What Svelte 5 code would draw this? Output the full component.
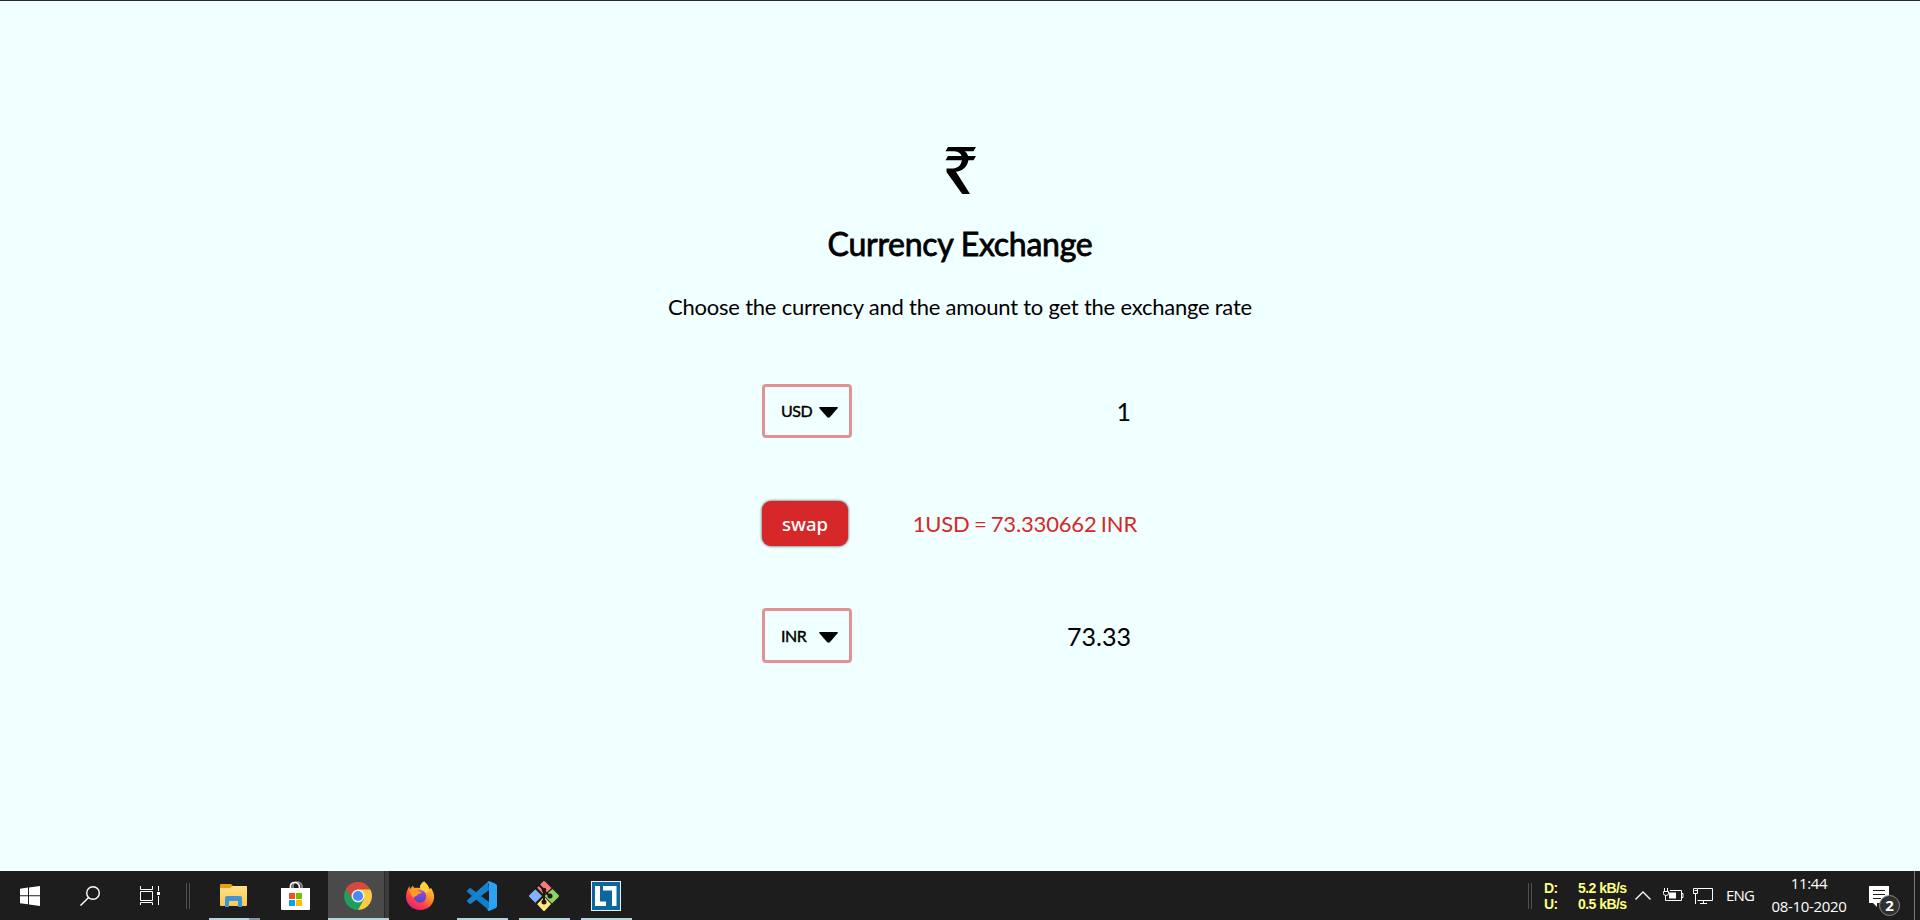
<script>
  const rows = { from: 'USD', to: 'INR', amount: '1', result: '73.33', rate: '1USD = 73.330662 INR' };
</script>

{#snippet picker(code)}
  <button class="picker">
    <span>{code}</span>
    <svg width="19" height="11" viewBox="0 0 19 11"><path d="M1 0h17q1.2 0 .8 1L11 10q-1.5 1.6-3 0L.2 1Q-.2 0 1 0z" /></svg>
  </button>
{/snippet}

<div class="screen">
  <main>
    <svg class="rupee" width="31" height="47" viewBox="0 0 31 47">
      <path d="M3 0H31L28.500 4.200H19.800Q22.500 6 23.200 9H31L28.500 13.200H23.400C22.300 19.500 18 23.800 11 24.800L25 47H17.200L1.500 25V21.500H6.500C12.500 21.500 16.200 18.500 16.800 13.200H.5L3 9H16.600C15.500 5.500 12 4.200 8 4.200H.5z" />
    </svg>
    <h1>Currency Exchange</h1>
    <p class="hint">Choose the currency and the amount to get the exchange rate</p>

    <section>
      <div class="row">{@render picker(rows.from)}<span class="amount">{rows.amount}</span></div>
      <div class="row mid"><button class="swap">swap</button><span class="rate">{rows.rate}</span></div>
      <div class="row last">{@render picker(rows.to)}<span class="amount">{rows.result}</span></div>
    </section>
  </main>

  <footer>
    <div class="sys">
      <svg width="20" height="20" viewBox="0 0 20 20" fill="#fff"><path d="M0 2.8 8 1.6V9.2H0zM9 1.4 20 0V9.2H9zM0 10.2H8V18.2L0 17.2zM9 10.2H20V20L9 18.4z" /></svg>
    </div>
    <div class="sys">
      <svg width="20" height="20" viewBox="0 0 20 20" fill="none" stroke="#fff" stroke-width="1.4"><circle cx="13" cy="7" r="6.3" /><path d="M8.6 11.5.5 19.6" /></svg>
    </div>
    <div class="sys view">
      <svg width="20" height="20" viewBox="0 0 20 20" fill="none" stroke="#fff"><path d="M.5 0V3.5H12.5V0M.5 5.5H12.5V14.5H.5zM.5 19V16.500H12.5V19M18.500 0V5M18.500 10V19" /><path fill="#fff" stroke="none" d="M17 6h3v3h-3z" /></svg>
    </div>
    <div class="grip"></div>

    <div class="apps">
      <div class="app open multi">
        <svg width="30" height="30" viewBox="0 0 30 30">
          <defs><linearGradient id="fold" x2="0" y2="1"><stop offset="0" stop-color="#ffe08a" /><stop offset="1" stop-color="#fcc84d" /></linearGradient></defs>
          <path fill="#e5a00d" d="M1 4q0-1 1-1h10l2 2h13q1 0 1 1v3H1z" />
          <path fill="url(#fold)" d="M1 7h10l3-2h13q1 0 1 1v18q0 1-1 1H2q-1 0-1-1z" />
          <path fill="#3d94d9" d="M8 15h13q2 0 2 2v9h-4v-6h-9v6H6v-9q0-2 2-2z" />
        </svg>
      </div>
      <div class="app">
        <svg width="30" height="30" viewBox="0 0 30 30">
          <g fill="none"><path stroke="#999" stroke-width="1.6" d="M12 8V5q0-4 4-4t5 4v3" /><path stroke="#fff" stroke-width="1.7" d="M9.500 8V5.500q0-4 4-4t5 4V8" /></g>
          <path fill="#fff" d="M0 7h29v21q0 1-1 1H1q-1 0-1-1z" />
          <path fill="#f25022" d="M8 12h6v6H8z" /><path fill="#7fba00" d="M15 12h6v6h-6z" /><path fill="#00a4ef" d="M8 19h6v6H8z" /><path fill="#ffb900" d="M15 19h6v6h-6z" />
        </svg>
      </div>
      <div class="app open active">
        <svg width="30" height="30" viewBox="0 0 30 30">
          <path fill="#d6493c" d="M2.900 8A14 14 0 0 1 27.100 8L15 15z" />
          <path fill="#d6493c" d="M2.900 8 9 18.500 15 15 15 8.500H27.400A14 14 0 0 0 2.900 8z" />
          <path fill="#1e9f5b" d="M2.900 8A14 14 0 0 0 15 29L20.600 18.500 15 21.500 9.400 18.300z" />
          <path fill="#fccd43" d="M15 8.500H27.400A14 14 0 0 1 15 29L20.800 18.200z" />
          <circle cx="15" cy="15" r="6.500" fill="#f1f1f1" /><circle cx="15" cy="15" r="5.100" fill="#4a8af5" />
        </svg>
      </div>
      <div class="app">
        <svg width="30" height="30" viewBox="0 0 30 30">
          <defs>
            <linearGradient id="fox" x1=".85" y1="0" x2=".25" y2="1"><stop offset="0" stop-color="#ffe34a" /><stop offset=".4" stop-color="#ff9a27" /><stop offset=".7" stop-color="#ff4344" /><stop offset="1" stop-color="#e51a87" /></linearGradient>
            <linearGradient id="globe" x2="0" y2="1"><stop offset="0" stop-color="#9a45e8" /><stop offset="1" stop-color="#514ac2" /></linearGradient>
          </defs>
          <path fill="url(#fox)" d="M19 .5C21 2 23.500 4.500 24.500 8L26 7C28 10 29.500 13 29 17 28.500 24 22.500 29 15.500 29 7.500 29 1.500 23.500 1 16.500 1 12 2.300 8 4.500 5L5 8 8 4.500 9 7C11 6.500 13 7 15 7 14.500 4.500 16.500 2 19 .5z" />
          <circle cx="15" cy="15.500" r="6.200" fill="url(#globe)" />
          <path fill="#ff9d25" d="M4.500 9C8 6.500 11 7.500 13 10L17 11C16 13 13 12.500 12.500 14 11 16 9 15 8.500 17 7 14 5 13 4.500 9z" />
          <path fill="#ffd23c" d="M19 .5C21 2 23.500 5 24 9 22.500 11 21.500 11.500 21.500 12.500 19.500 9 15.500 9 15 7 14.500 4.500 16.500 2 19 .5z" />
        </svg>
      </div>
      <div class="app open">
        <svg width="30" height="30" viewBox="0 0 30 30">
          <path fill="#0f7ecb" d="M0 9.500 2.500 7.300Q3.300 6.800 4.200 7.400L22 21V29.500L1 11.500Q-.3 10.500 0 9.500z" />
          <path fill="#1482cf" d="M0 20.500Q-.3 19.500 1 18.500L21 .5 22 9 4.200 22.600Q3.300 23.200 2.500 22.700z" />
          <path fill="#2aa4f2" d="M22 0 28.500 2.800Q30 3.500 30 5V25Q30 26.500 28.500 27.200L22 30Q20.500 30 20.500 28.500L22 27V3L20.500 1.500Q20.500 0 22 0z" />
        </svg>
      </div>
      <div class="app open">
        <svg width="30" height="30" viewBox="0 0 30 30">
          <path fill="#f77b7b" d="M14 .5q1-1 2 0l6.500 6.500-7.500 7-7-7z" /><path fill="#80b3ff" d="M.5 14l6.200-6 7.300 7-7 7.500L.5 16q-1-1 0-2z" />
          <path fill="#8dd35f" d="M23.500 8 29.500 14q1 1 0 2l-6.500 6.500-7.500-7.500z" /><path fill="#ffe680" d="M15 15.500l7 7.500-6 6.500q-1 1-2 0l-6-6.500z" />
          <path fill="none" stroke="#20160f" stroke-width="2" d="M10 4 15 9V22M15 10 21 15M7 22.500 14.500 15 7 7.500" /><g fill="#20160f"><circle cx="15" cy="9" r="2.300" /><circle cx="15" cy="21" r="2.500" /><circle cx="21" cy="15" r="2.500" /></g>
        </svg>
      </div>
      <div class="app open">
        <svg width="30" height="30" viewBox="0 0 30 30">
          <path fill="#e8f2f8" d="M0 0h30v30H0z" /><path fill="#0d669f" d="M1 1h28v28H1z" />
          <path fill="#fff" d="M4 5h5v15.500h6V25H4zM12 5h13.500v20H21V9.500h-9z" />
        </svg>
      </div>
    </div>

    <div class="tray">
      <div class="grip"></div>
      <div class="net"><span>D:</span><span>5.2 kB/s</span><span>U:</span><span>0.5 kB/s</span></div>
      <svg class="chev" width="16" height="9" viewBox="0 0 16 9" fill="none" stroke="#fff" stroke-width="1.300"><path d="M.5 8.500 8 1 15.500 8.500" /></svg>
      <svg class="batt" width="21" height="16" viewBox="0 0 21 16" fill="none" stroke="#fff"><path d="M7 3.500H18.500V13.500H4.500M18.500 6.500H20V10.500H18.500M1.500 1V4M4.500 1V4M.5 4.500H5.500V6.500Q5.500 8.500 3 8.500 .5 8.500.5 6.500zM2.500 9V13.500H4.500" /><path fill="#fff" stroke="none" d="M6 5.500h7v6H6z" /></svg>
      <svg class="mon" width="21" height="18" viewBox="0 0 21 18" fill="none" stroke="#fff"><path d="M5 1.500H19.500V13.500H4.500M10.500 13.500V16.500M7 16.500H14M.5 1.500H4.500V6.500H.5zM2.500 6.500V17M1.500 3.500H4" /></svg>
      <span class="lang">ENG</span>
      <div class="clock"><span class="time">11:44</span><span>08-10-2020</span></div>
      <div class="note">
        <svg width="20" height="21" viewBox="0 0 20 21"><path fill="#fff" d="M0 0h20v17H8v4l-4-4H0z" /><path stroke="#1d1d1d" stroke-width="1.200" d="M4 4.500h12M4 8.500h12M4 12.500h8" /></svg>
        <b>2</b>
      </div>
      <div class="edge"></div>
    </div>
  </footer>
</div>

<style>
  :global(body) { margin: 0; background: #f0ffff; }
  .screen { box-sizing: border-box; width: 1920px; height: 920px; border-top: 1px solid #29262c; background: #f0ffff; display: flex; flex-direction: column; font-family: Lato, sans-serif; color: #000; overflow: hidden; }
  main { height: 870px; box-sizing: border-box; padding-top: 146px; display: flex; flex-direction: column; align-items: center; }
  .rupee { display: block; }
  h1 { margin: 30px 0 0; font-size: 32px; line-height: 40px; font-weight: 400; letter-spacing: -0.270px; -webkit-text-stroke: 0.8px #000; white-space: nowrap; }
  .hint { margin: 28px 0 0; font-size: 22px; line-height: 30px; letter-spacing: -0.230px; white-space: nowrap; }
  section { width: 374px; margin-top: 62px; margin-left: -22px; display: flex; flex-direction: column; }
  .row { display: flex; justify-content: space-between; align-items: center; height: 54px; }
  .mid { height: 45px; margin: 63px 0 62px; }
  .last { height: 55px; }
  .picker { box-sizing: border-box; width: 90px; height: 100%; padding: 0 11px 0 16px; border: 3px solid #e39192; border-radius: 4px; background: transparent; display: flex; justify-content: space-between; align-items: center; font: 16px Lato, sans-serif; letter-spacing: -0.500px; -webkit-text-stroke: 0.4px #000; color: #000; }
  .picker span { margin-top: -1px; }
  .picker svg { margin-top: 3px; }
  .amount { font-size: 25px; line-height: 30px; margin-right: 5px; }
  .swap { width: 86px; height: 45px; padding: 0; border: 0; border-radius: 9px; background: #d62828; box-shadow: 0 0 3px #333; color: #fff; font: 500 18.500px "Noto Sans", sans-serif; }
  .rate { font-size: 22px; line-height: 30px; letter-spacing: -0.170px; word-spacing: -1.200px; margin-right: -1px; color: #d62828; white-space: nowrap; }

  footer { height: 49px; display: flex; background: #1d1d1d; color: #fff; font-family: "Open Sans", sans-serif; }
  footer svg { display: block; }
  .sys { width: 60px; display: flex; padding: 15px 0 0 20px; box-sizing: border-box; }
  .view { width: 66px; }
  .grip { box-sizing: border-box; width: 4px; height: 26px; margin-top: 12px; border: solid #505050; border-width: 0 1px; }
  .apps { display: flex; margin-left: 13px; }
  .app { position: relative; width: 62px; display: flex; justify-content: center; padding-top: 10px; box-sizing: border-box; }
  .open::after { content: ''; position: absolute; left: 6px; width: 51px; bottom: 0; height: 2px; background: #b5d3d8; }
  .multi::after { background: linear-gradient(90deg, #b5d3d8 40px, #80979b 40px); }
  .active { margin: 0 -1px 0 1px; background: linear-gradient(90deg, #4a4a4a 56px, #292929 56px 57px, #3c3c3c 57px 61px, #1d1d1d 61px); }
  .active svg { margin-left: -2px; }
  .active::after { left: 0; width: 61px; }
  .tray { margin-left: auto; display: flex; }
  .net { display: grid; grid-template-columns: 34px 49px; align-content: start; margin: 9px 0 0 12px; font: bold 14px/16px "Liberation Sans", sans-serif; letter-spacing: -0.550px; color: #ffff80; white-space: nowrap; }
  .chev { margin: 20px 0 0 8px; }
  .batt { margin: 16px 0 0 12px; }
  .mon { margin: 16px 0 0 9px; }
  .lang { width: 44px; margin: 14px 0 0 12px; font-size: 15px; line-height: 20px; letter-spacing: -0.8px; margin-right: 1px; }
  .clock { width: 76px; display: flex; flex-direction: column; align-items: center; font-size: 15px; line-height: 23px; letter-spacing: -0.350px; margin-top: 1px; white-space: nowrap; }
  .note { position: relative; margin: 15px 25px 0 22px; width: 20px; }
  .note b { position: absolute; left: 10px; top: 9px; box-sizing: border-box; width: 21px; height: 21px; border: 1px solid #888; border-radius: 50%; background: #303030; font-size: 15px; line-height: 19px; text-align: center; }
  .edge { width: 6px; box-sizing: border-box; border-left: 1px solid #777; }
</style>
